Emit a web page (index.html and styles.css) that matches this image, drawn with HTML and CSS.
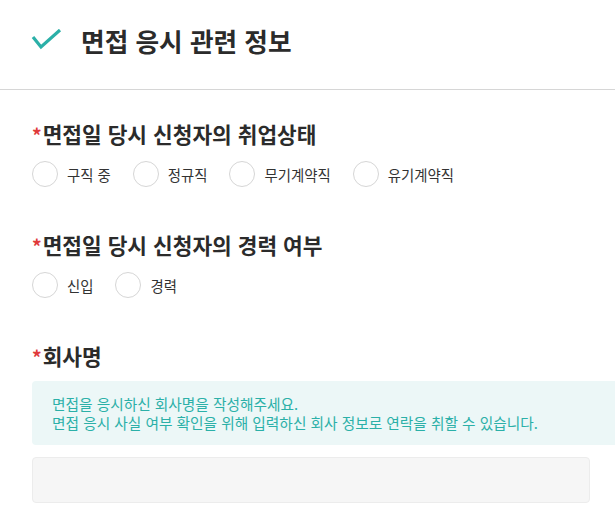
FILE: index.html
```html
<!DOCTYPE html>
<html lang="ko">

<head>
    <meta charset="UTF-8">
    <meta name="viewport" content="width=device-width, initial-scale=1.0">
    <title>면접 응시 관련 정보</title>
    <link rel="stylesheet" href="styles.css">
</head>

<body>

    <header class="page-head">
        <svg class="check" width="32" height="24" viewBox="0 0 32 24">
            <path d="M2 8 L10 18 L29 1" fill="none" stroke="#2bb0a8" stroke-width="3.2" />
        </svg>
        <h1>면접 응시 관련 정보</h1>
    </header>

    <main class="form">
        <section class="field">
            <h2><span class="req">*</span>면접일 당시 신청자의 취업상태</h2>
            <div class="options">
                <label class="option"><span class="circle"></span>구직 중</label>
                <label class="option"><span class="circle"></span>정규직</label>
                <label class="option"><span class="circle"></span>무기계약직</label>
                <label class="option"><span class="circle"></span>유기계약직</label>
            </div>
        </section>

        <section class="field">
            <h2><span class="req">*</span>면접일 당시 신청자의 경력 여부</h2>
            <div class="options">
                <label class="option"><span class="circle"></span>신입</label>
                <label class="option"><span class="circle"></span>경력</label>
            </div>
        </section>

        <section class="field">
            <h2><span class="req">*</span>회사명</h2>
            <div class="notice">
                <p>면접을 응시하신 회사명을 작성해주세요.</p>
                <p>면접 응시 사실 여부 확인을 위해 입력하신 회사 정보로 연락을 취할 수 있습니다.</p>
            </div>
            <div class="input"></div>
        </section>
    </main>

</body>

</html>
```

FILE: styles.css
```css
body {
    margin: 0;
    padding: 0;
    font-family: "Noto Sans CJK KR", "Noto Sans", sans-serif;
    color: #333;
    background: #fff;
    overflow: hidden;
}

.page-head {
    display: flex;
    align-items: center;
    height: 89px;
    padding-left: 31px;
    border-bottom: 1px solid #d6d6d6;
}

.page-head .check {
    margin-right: 18px;
    margin-top: -8px;
}

.page-head h1 {
    margin: 0;
    font-size: 25.7px;
    font-weight: 700;
    color: #2b2b2b;
    margin-top: -9px;
}

.form {
    padding: 30px 0 0 32px;
}

.field {
    margin-bottom: 44px;
}

.field h2 {
    margin: 0;
    font-size: 21.4px;
    line-height: 28px;
    font-weight: 700;
    color: #2b2b2b;
}

.req {
    color: #e03a3a;
    font-size: 19px;
    margin-right: 1px;
}

.options {
    display: flex;
    gap: 22px;
    margin-top: 12px;
}

.option {
    display: flex;
    align-items: center;
    font-size: 14.4px;
    color: #333;
}

.circle {
    width: 24px;
    height: 24px;
    border: 1px solid #d6d6d6;
    border-radius: 50%;
    margin-right: 9px;
}

.notice {
    margin-top: 10px;
    background: #ecf7f7;
    padding: 13px 20px 13px 20px;
    border-radius: 4px 0 0 4px;
    color: #2bb0a8;
    font-size: 14.7px;
    line-height: 19px;
}

.notice p {
    margin: 0;
    white-space: nowrap;
}

.input {
    margin-top: 12px;
    width: 556px;
    height: 44px;
    background: #f6f6f6;
    border: 1px solid #ececec;
    border-radius: 4px;
}
```
